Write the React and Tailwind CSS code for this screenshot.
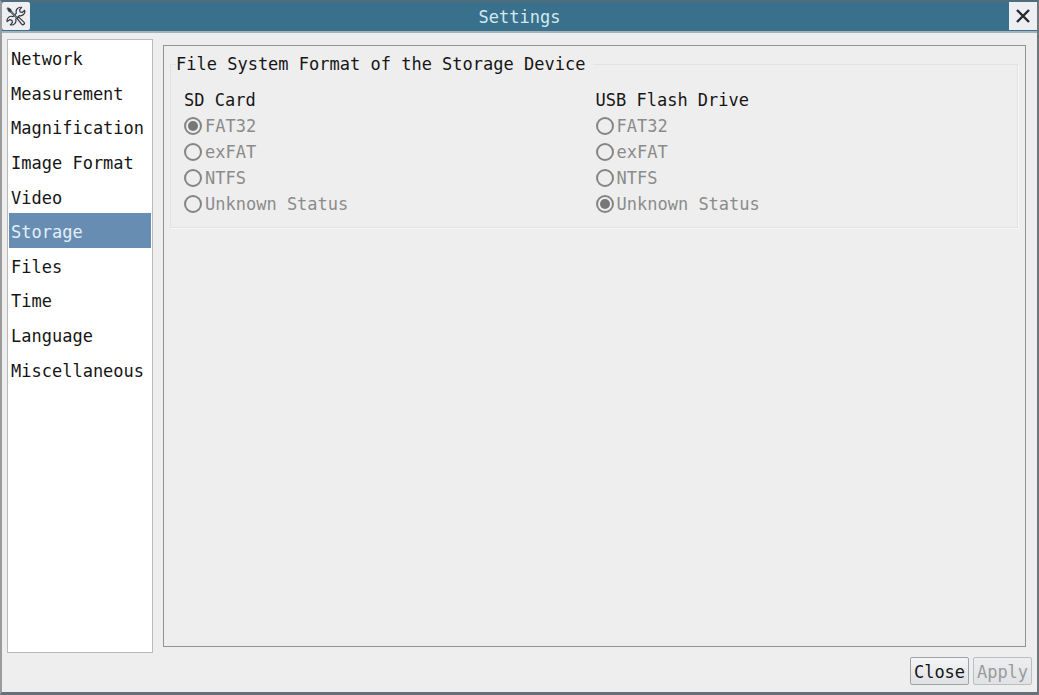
import React, { useState } from 'react'

const PAGES = [
  'Network',
  'Measurement',
  'Magnification',
  'Image Format',
  'Video',
  'Storage',
  'Files',
  'Time',
  'Language',
  'Miscellaneous',
]

const FORMATS = ['FAT32', 'exFAT', 'NTFS', 'Unknown Status']

function ToolsIcon() {
  return (
    <svg viewBox="0 0 20 20" className="w-5 h-5" fill="#eeeff2" stroke="#33373b" strokeWidth="1.2" strokeLinejoin="round" strokeLinecap="round" aria-hidden="true">
      {/* Double ended spanner */}
      <path d="M15.6 1.4a4.4 4.4 0 0 0-5.2 5.8L7 10.6a4.4 4.4 0 0 0-5.9 5l2.7-1.9 2.2.6.5 2.1-2.1 2.4a4.4 4.4 0 0 0 5.3-5.7l3.5-3.5a4.4 4.4 0 0 0 5.5-5.3l-2.5 2.2-2.1-.6-.5-2.1z" />
      {/* Screwdriver */}
      <path d="M11.2 12.6l1.5-1.5 5.2 5a1.5 1.5 0 0 1-2.1 2.2z" />
      <path d="M2 1.7l2.9 1.5.6 1.9 6.4 6.7-1 1L4.4 6.3l-1.7-.7L1.2 2.6z" fill="#33373b" strokeWidth="0.6" />
      <path d="M5.2 5.9l5.8 6" strokeWidth="0.5" stroke="#eeeff2" />
    </svg>
  )
}

function CloseIcon() {
  return (
    <svg viewBox="0 0 14 14" className="w-3.5 h-3.5" fill="none" stroke="#26282a" strokeWidth="2.4" aria-hidden="true">
      <path d="M1 1l12 12M13 1L1 13" />
    </svg>
  )
}

function FormatGroup({ title, name, value }) {
  return (
    <div role="radiogroup" aria-label={title}>
      <div className="leading-[26px]">{title}</div>
      {FORMATS.map((format) => (
        <label key={format} className="flex items-center gap-[3px] leading-[26px] text-[#8b8b8b]">
          <input
            type="radio"
            name={name}
            defaultChecked={format === value}
            disabled
            className="appearance-none shrink-0 grid place-content-center w-[18px] h-[18px] rounded-full border-2 border-[#858585] checked:before:block checked:before:w-2.5 checked:before:h-2.5 checked:before:rounded-full checked:before:bg-[#777777]"
          />
          {format}
        </label>
      ))}
    </div>
  )
}

export default function App() {
  const [page, setPage] = useState('Storage')

  return (
    <div className="min-h-screen flex flex-col bg-[#eeeeee] border-t-2 border-b-3 border-x-2 border-t-[#4f6d7a] border-b-[#657078] border-l-[#9b9b9b] border-r-[#70777b] font-['DejaVu_Sans_Mono','Liberation_Mono',monospace] text-[17px] text-[#161616]">
      {/* Title bar */}
      <header className="flex items-start justify-between h-[31px] bg-[#39718c] border-b-2 border-[#a3b4bd]">
        <button type="button" aria-label="Window menu" className="grid place-items-center w-7 h-7 rounded-xs bg-[#eeeff2]">
          <ToolsIcon />
        </button>
        <h1 className="leading-[30px] text-[#d3e8f3]">Settings</h1>
        <button type="button" aria-label="Close window" className="grid place-items-center w-7 h-7 bg-[#eeeff2]">
          <CloseIcon />
        </button>
      </header>

      <div className="flex-1 flex gap-2.5 pl-[5px] pr-[11px] pt-1.5">
        {/* Page list */}
        <nav className="shrink-0 w-[146px] px-px bg-white border border-[#b9b9b9]">
          <ul className="flex flex-col h-[346px]">
            {PAGES.map((item) => (
              <li key={item} className="flex-1 flex">
                <button
                  type="button"
                  onClick={() => setPage(item)}
                  className={`w-full pl-0.5 pt-1 text-left leading-6 ${item === page ? 'bg-[#688db2] text-[#e3eef8]' : ''}`}
                >
                  {item}
                </button>
              </li>
            ))}
          </ul>
        </nav>

        {/* Page content */}
        <main className="flex-1 mt-1.5 mb-1.5 pl-1.5 pr-[7px] pt-[5px] border border-[#929292]">
          <fieldset className="pl-[13px] pr-2.5 pt-2.5 pb-2.5 border border-[#e2e2e2] shadow-[1px_1px_0_#f7f7f7]">
            <legend className="-ml-2 pr-2 leading-[26px]">File System Format of the Storage Device</legend>
            <div className="grid grid-cols-2">
              <FormatGroup title="SD Card" name="sd" value="FAT32" />
              <FormatGroup title="USB Flash Drive" name="usb" value="Unknown Status" />
            </div>
          </fieldset>
        </main>
      </div>

      <footer className="flex justify-end gap-1 px-[5px] pt-1 pb-[7px]">
        <button type="button" className="w-[59px] h-7 rounded-xs border border-[#a0a3a6] bg-linear-to-b from-[#f5f5f6] to-[#dfe1e4] leading-7">
          Close
        </button>
        <button type="button" disabled className="w-[59px] h-7 rounded-xs border border-[#bcbfc2] bg-linear-to-b from-[#eeeeef] to-[#e0e2e5] leading-7 text-[#999b9e]">
          Apply
        </button>
      </footer>
    </div>
  )
}
